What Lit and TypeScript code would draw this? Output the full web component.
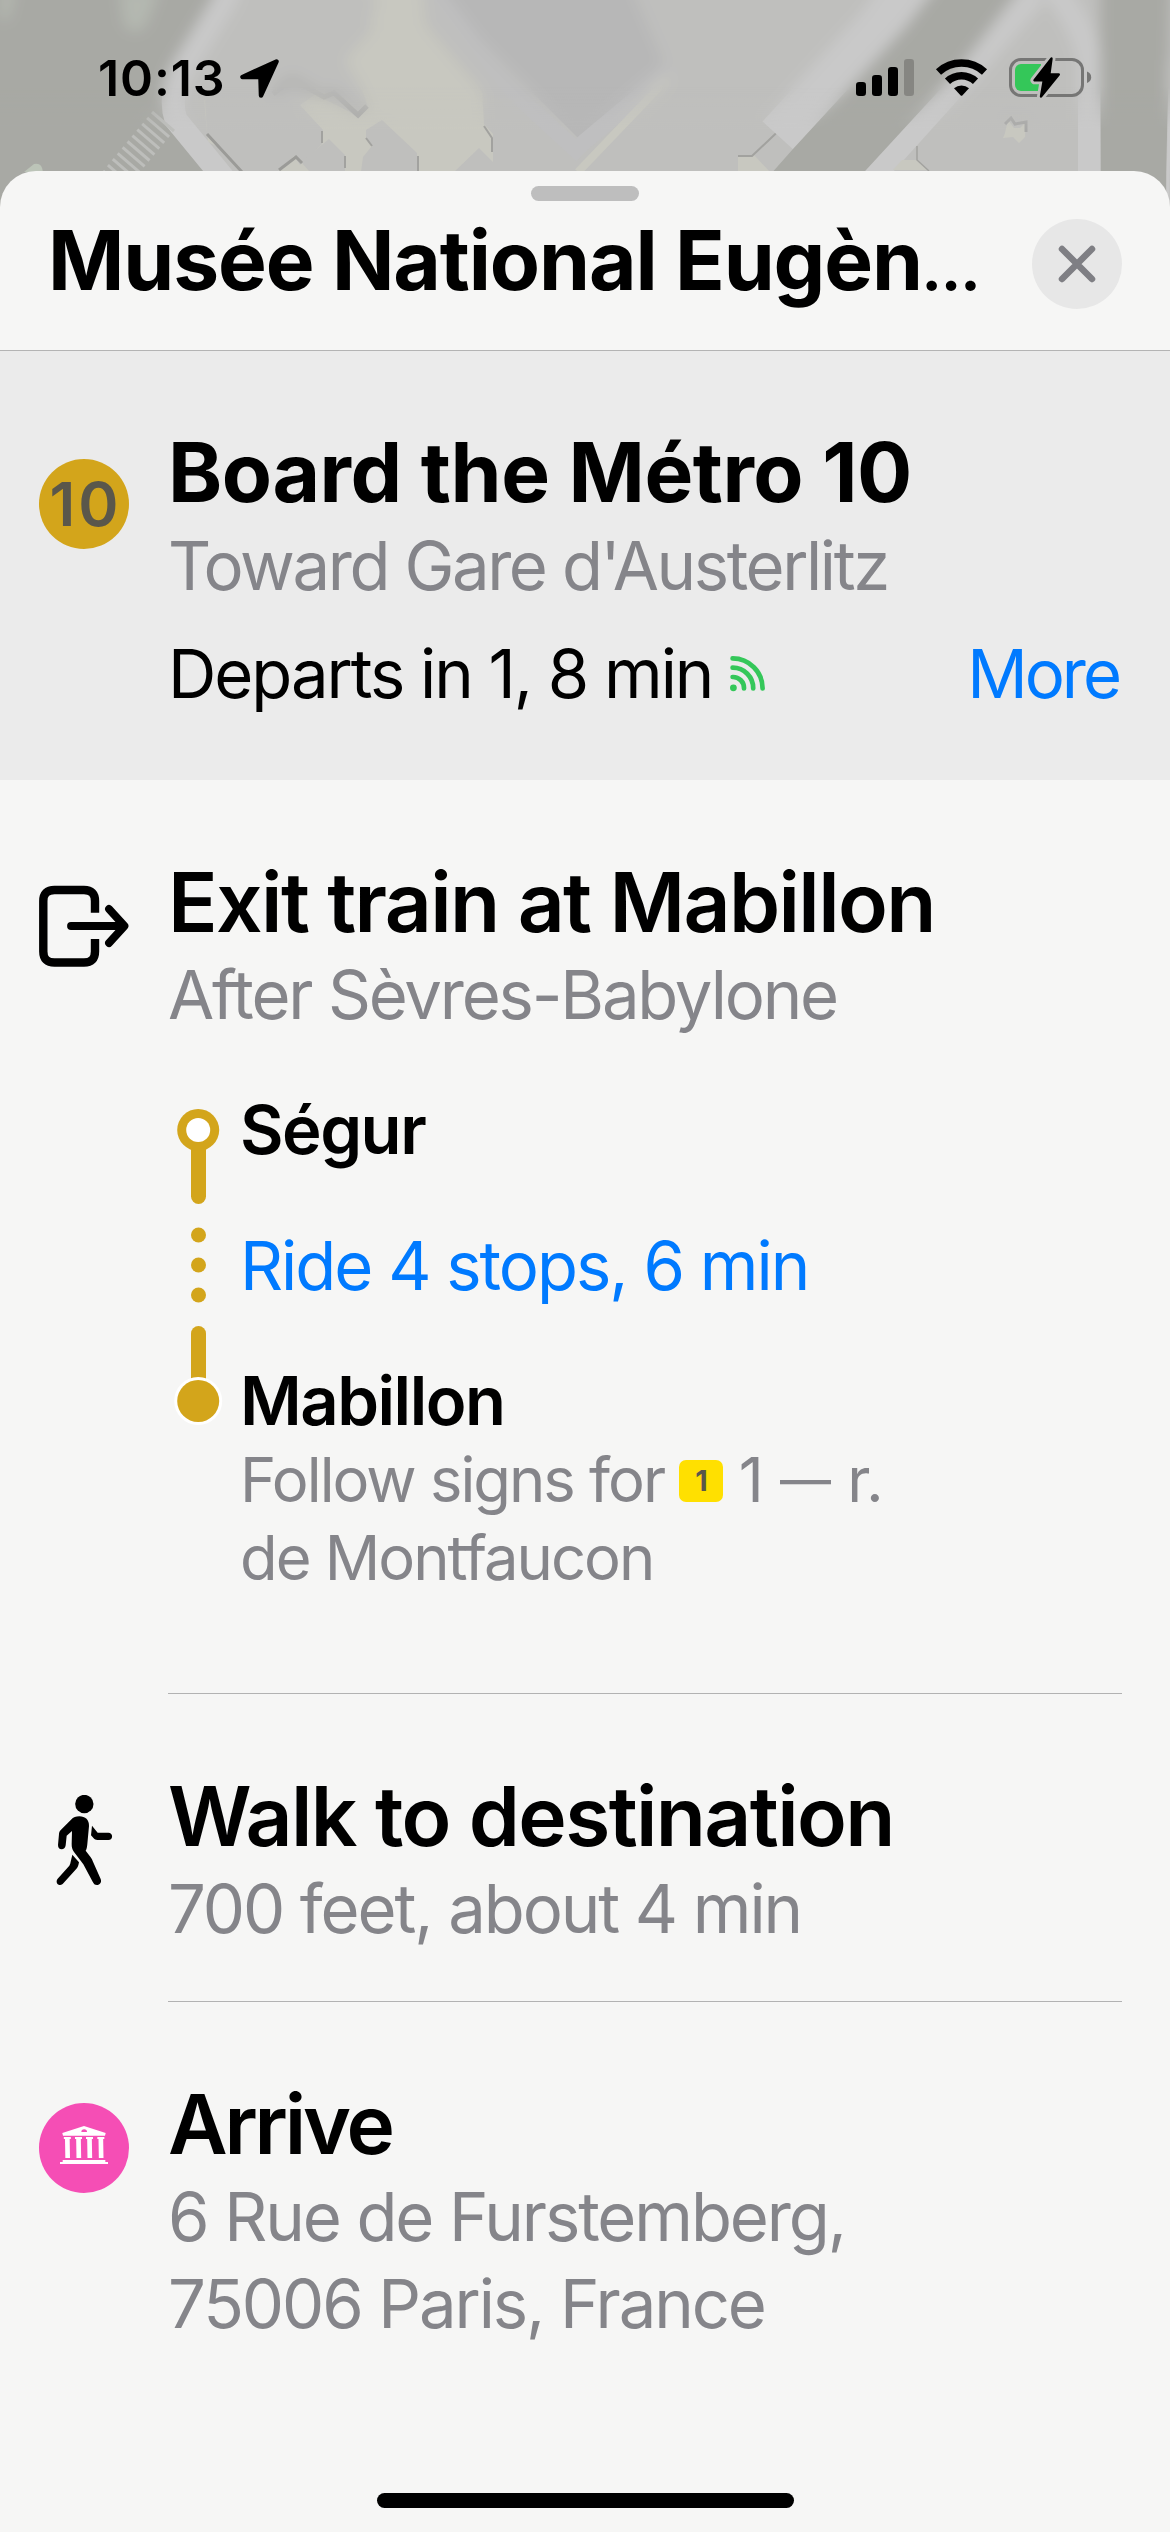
import { LitElement, html, css, svg } from "lit";
import { customElement } from "lit/decorators.js";

@customElement("map-backdrop")
class MapBackdrop extends LitElement {
  static styles = css`
    :host { display: block; }
    svg { display: block; }
  `;
  private stripes() {
    return Array.from({ length: 12 }, (_, i) => {
      const x = 152 - i * 4.9;
      const y = 112 + i * 5.9;
      return svg`<path d="M${x} ${y} l22 19" stroke="#bdbebb" stroke-width="3"/>`;
    });
  }
  render() {
    return html`<svg width="1170" height="240" viewBox="0 0 1170 240">
      <defs>
        <filter id="soft" x="-5%" y="-20%" width="110%" height="140%"><feGaussianBlur stdDeviation="7" /></filter>
        <linearGradient id="fade" x1="0" y1="0" x2="0" y2="1">
          <stop offset="0.36" stop-color="#000" /><stop offset="0.54" stop-color="#fff" />
        </linearGradient>
        <mask id="low"><rect width="1170" height="240" fill="url(#fade)" /></mask>
        <g id="town" fill="none">
          <rect x="-40" y="-40" width="1250" height="300" fill="#bfbfbd" />
          <path d="M420 -40 L620 -40 L668 72 L640 98 L583 143 L490 50 L440 0Z" fill="#b7b7b7" />
          <path d="M425 -20 L500 80 L576 150 L583 143 L670 70" stroke="#bfbfc0" stroke-width="16" />
          <path d="M372 -30 L420 -30 L425 25 L482 92 L484 124 L493 134 L493 162 L479 148 L454 172 L270 172 L208 142 L204 100 L276 103 L292 82 L325 98 L358 108 L340 66 L372 30Z" fill="#c8c8c0" />
          <path d="M203 60 L275 92 L292 82 L325 99 L345 96 L368 108 L358 118 L322 90 L300 105 L323 130 L322 144 L300 165 L294 156 L277 172 L243 172 L207 134Z" fill="#bfbfbd" />
          <path d="M204 0 L380 0 L345 60 L362 88 L368 108 L358 116 L322 98 L292 80 L273 96 L204 100Z" fill="#bfbfbd" />
          <path d="M273 94 L292 79 L324 97 L334 93 L358 115 L367 106" stroke="#a9a9a8" stroke-width="5" />
          <path d="M329 139 L345 155 V172 H310 L301 162Z" fill="#bfbfbd" />
          <path d="M382 120 L417 153 V172 H361 L363 157 L372 146 L366 138 V130Z" fill="#bfbfbd" />
          <path d="M366 138 L372 146 M418 156 V172 M322 131 V143 M484 126 L492 138 V152 M345 156 V168" stroke="#a2a29f" stroke-width="2" />
          <path d="M207 134 L242 172 M279 170 L296 157 L302 163" stroke="#9b9b98" stroke-width="3" />
          <path d="M-40 -40 H232 L180 60 Q160 90 167 118 L208 175 V260 H-40Z" fill="#a8a9a4" />
          <path d="M238 -40 L225 0 L183 68 Q168 95 176 120 L222 176 L240 200" stroke="#c9c9c9" stroke-width="23" />
          <path d="M119 -10 L160 -10 L146 25 Q135 38 124 25Z" fill="#b4b8b0" />
          <path d="M0 -10 H16 L8 20 H0Z" fill="#b4b8b0" />
          <path d="M24 172 L34 164 Q42 162 43 172Z" fill="#bcc4b8" />
          <path d="M578 172 L668 78" stroke="#c8c8c0" stroke-width="8" />
          <path d="M738 155 H754 L770 172 H738Z" fill="#c8c8c0" />
          <path d="M738 156 H752 L790 120" stroke="#a2a29f" stroke-width="2" />
          <path d="M990 -40 L920 60 L818 172" stroke="#c9c9c9" stroke-width="150" />
          <path d="M1000 -40 L932 48 L818 172 L740 260" stroke="#a8a9a4" stroke-width="68" />
          <path d="M1080 -40 L985 70 L893 172 L1092 172 V-40Z" fill="#bfbfbd" />
          <path d="M902 160 H918 L928 170 H893Z" fill="#c8c8c0" />
          <path d="M917 146 V160 L929 171" stroke="#a2a29f" stroke-width="1.5" />
          <path d="M1005 133 L1008 120 L1014 128 L1020 128 L1026 122 L1025 137 L1019 143 L1013 137 L1003 138Z" fill="#c8c8c0" />
          <path d="M1005 124 L1011 118 L1015 124 L1026 122 V132" stroke="#a9a9a8" stroke-width="3" />
          <path d="M1030 -40 Q1095 30 1090 80 V260" stroke="#c9c9c9" stroke-width="24" />
          <path d="M1100 -40 H1172 L1166 172 V260 H1101Z" fill="#a8a9a4" />
          <path d="M1170 60 L1167 260" stroke="#c9c9c9" stroke-width="3" />
          ${this.stripes()}
        </g>
      </defs>
      <use href="#town" filter="url(#soft)" />
      <use href="#town" mask="url(#low)" />
    </svg>`;
  }
}

@customElement("status-bar")
class StatusBar extends LitElement {
  static styles = css`
    :host { display: flex; justify-content: space-between; align-items: flex-start; padding: 54px 74px 0 98px; box-sizing: border-box; }
    .left { display: flex; align-items: flex-start; }
    .time { font-size: 50px; line-height: 48px; font-weight: 600; letter-spacing: 0.9px; }
    svg { display: block; }
    .arrow { margin-left: 11px; }
  `;
  render() {
    return html`
      <div class="left">
        <span class="time">10:13</span>
        <svg class="arrow" width="44" height="48" viewBox="236 54 44 48">
          <path d="M275.5 61.500 L241.500 77 H258 Q259.500 77 259.500 78.500 L260 95.500Z" stroke="#000" stroke-width="4.500" stroke-linejoin="round" />
        </svg>
      </div>
      <svg width="246" height="48" viewBox="850 54 246 48">
        <rect x="856" y="82" width="10" height="14" rx="3.2" />
        <rect x="872" y="75" width="10" height="21" rx="3.2" />
        <rect x="888" y="67" width="10" height="29" rx="3.2" />
        <rect x="904" y="59" width="10" height="37" rx="3.2" fill="#868682" />
        <g fill="none" stroke="#000">
          <path d="M938.500 72 A34 34 0 0 1 984.500 72" stroke-width="7.500" />
          <path d="M947.500 81.300 A20.500 20.500 0 0 1 975.500 81.300" stroke-width="7.500" />
        </g>
        <path d="M954 88.300 A11.500 11.500 0 0 1 969 88.300 L962.300 95.400 Q961.500 96.200 960.700 95.400Z" />
        <rect x="1010.500" y="59.500" width="72" height="36" rx="10.500" fill="none" stroke="#767675" stroke-width="3" />
        <path d="M1087 71.500 Q1091.200 73 1091.200 77.300 Q1091.200 81.500 1087 83Z" fill="#767675" />
        <rect x="1015" y="64" width="25" height="27" rx="6" fill="#34c759" />
        <rect x="1034" y="64" width="7" height="27" fill="#34c759" />
        <path d="M1051.500 58.500 L1034.500 80.300 H1043.800 L1041 96.500 L1058.800 74.500 H1049.300Z" stroke="#bfbfbd" stroke-width="8" stroke-linejoin="round" />
        <path d="M1051.500 58.500 L1034.500 80.300 H1043.800 L1041 96.500 L1058.800 74.500 H1049.300Z" stroke="#000" stroke-width="2.400" stroke-linejoin="round" />
      </svg>
    `;
  }
}

@customElement("app-root")
class AppRoot extends LitElement {
  static styles = css`
    :host { display: block; position: relative; width: 1170px; height: 2532px; overflow: hidden; background: #f6f6f5; color: #000; font-family: Inter, "Liberation Sans", sans-serif; }
    map-backdrop { position: absolute; left: 0; top: 0; }
    status-bar { position: relative; height: 171px; }
    .sheet { position: relative; height: 2361px; box-sizing: border-box; border-radius: 36px 36px 0 0; background: #f6f6f5; overflow: hidden; }
    .grabber { position: absolute; left: 531px; top: 15px; width: 108px; height: 15px; border-radius: 7.5px; background: #bebebe; }
    .home { position: absolute; left: 377px; bottom: 24px; width: 417px; height: 15px; border-radius: 7.5px; background: #000; }
    .header { display: flex; align-items: flex-start; justify-content: space-between; height: 180px; box-sizing: border-box; padding: 40px 48px 0; border-bottom: 1px solid #b4b4b4; }
    .title { font-size: 82px; line-height: 100px; font-weight: 700; letter-spacing: -1.1px; white-space: nowrap; margin: 0; }
    .dots { font-size: 52px; line-height: 1; font-weight: 900; letter-spacing: 0; }
    .close { display: flex; align-items: center; justify-content: center; width: 90px; height: 90px; margin-top: 8px; border-radius: 50%; background: #e7e7e7; flex: none; }
    svg { display: block; }
    .step { display: grid; grid-template-columns: 90px 1fr; column-gap: 39px; padding-left: 39px; }
    .icon { margin-top: 101px; width: 90px; height: 90px; }
    .body { padding: 74px 0 49px; margin-right: 48px; border-bottom: 1px solid #b2b2b2; }
    .last .body { border-bottom: none; }
    .board { height: 429px; background: #ebebeb; }
    .board .body { border-bottom: none; padding-top: 73px; }
    .board .icon { margin-top: 108px; }
    .ride { height: 914px; }
    .name { font-size: 82px; line-height: 98px; font-weight: 600; letter-spacing: -1.62px; margin: 0 0 -1px; white-space: nowrap; }
    .name.strong { font-weight: 700; letter-spacing: -0.45px; margin-bottom: 0; }
    .name.tight { letter-spacing: -3.2px; }
    .sub { font-size: 67px; line-height: 87px; letter-spacing: -2.1px; color: #85858a; white-space: nowrap; }
    .sub.t1 { letter-spacing: -2.43px; }
    .sub.t2 { letter-spacing: -2.2px; }
    .route { display: flex; align-items: center; justify-content: center; border-radius: 50%; background: #d3a51b; color: #5a574b; font-size: 61px; font-weight: 600; letter-spacing: 3px; text-indent: 3px; }
    .departs { display: flex; align-items: center; margin-top: 21px; font-size: 67px; line-height: 87px; letter-spacing: -2.05px; white-space: nowrap; }
    .departs svg { margin-left: 18px; }
    .link { color: #007aff; }
    .more { margin: 0 3px 0 auto; letter-spacing: -3px; }
    .stops { display: grid; grid-template-columns: 72px 1fr; margin-top: 47px; }
    .list { display: flex; flex-direction: column; padding-top: 1px; }
    .stop { font-size: 67px; line-height: 87px; margin-bottom: 48.5px; white-space: nowrap; letter-spacing: -2.02px; }
    .stop.station { font-weight: 600; letter-spacing: -1.5px; }
    .stop.end { margin-bottom: -3px; }
    .signs { font-size: 61.5px; line-height: 78px; color: #85858a; letter-spacing: -2px; }
    .signs .ref { letter-spacing: -0.5px; }
    .signs .dash { font-size: 51px; line-height: 1; vertical-align: 4px; }
    .signs .exit { display: inline-flex; align-items: center; justify-content: center; vertical-align: 11px; width: 44px; height: 42px; border-radius: 7px; background: #ffe000; color: #5a574b; font-size: 29px; line-height: 42px; font-weight: 700; letter-spacing: 0; }
    .poi { display: flex; border-radius: 50%; background: #f54eb5; }
  `;

  private exitIcon() {
    return svg`<svg class="icon" viewBox="0 0 90 90" fill="none" stroke="#000">
      <path d="M56 31.700 V20 Q56 9 45 9 H15.500 Q4.300 9 4.300 20 V70.500 Q4.300 81.500 15.500 81.500 H45 Q56 81.500 56 70.500 V58" stroke-width="8.400" />
      <path d="M32 45 H84 M70 28 L85.500 45 L70 62" stroke-width="7.800" stroke-linecap="round" stroke-linejoin="round" />
    </svg>`;
  }
  private walkIcon() {
    return svg`<svg class="icon" viewBox="117 165 270 270">
      <circle cx="253" cy="192" r="27.500" />
      <path d="M238 229 C256 229 268 240 267 258 L262 312 C261 322 260 327 257 332 L272 352 C275 356 277 360 279 365 L302 417 C306 428 299 435 291 435 C284 435 281 431 278 425 L250 373 L222 336 C216 328 215 321 215 312 L216 273 L200 287 L197 316 C196 324 191 328 185 328 C178 328 174 323 174 315 L177 282 C177 277 179 273 183 269 L213 239 C220 232 228 229 238 229Z" />
      <path d="M217 344 L237 367 C235 377 234 382 228 388 L190 430 C186 435 181 436 176 434 C169 431 168 422 173 416 L208 377 C211 372 211 369 212 365Z" />
      <path d="M276 257 L293 278 H325 C340 278 340 300 325 300 H292 C287 300 284 298 281 295 L273 286Z" />
    </svg>`;
  }
  private museumIcon() {
    return svg`<svg width="90" height="90" viewBox="117 129 270 270" fill="#fff">
      <path d="M252 198 L317 219 L315 227 H189 L187 219Z" />
      <path d="M244 216 a8.500 8.500 0 0 1 17 0Z" fill="#f54eb5" />
      ${[202, 235.5, 268.5, 302.5].map((x) => svg`<path d="M${x - 10.5} 231 h21 v6 h-3.500 l1 57 h-14 l-1 -57 h-3.500Z" />`)}
      <path d="M188 300 H316 V306 H324 V312 H180 V306 H188Z" />
    </svg>`;
  }

  render() {
    return html`
      <map-backdrop></map-backdrop>
      <status-bar></status-bar>
      <main class="sheet">
        <div class="grabber"></div>
        <header class="header">
          <h1 class="title">Musée National Eugèn<span class="dots">…</span></h1>
          <div class="close">
            <svg width="40" height="40" viewBox="-20 -20 40 40" stroke="#7f7f84" stroke-width="6.500" stroke-linecap="round">
              <path d="M-15 -15 L15 15 M15 -15 L-15 15" />
            </svg>
          </div>
        </header>

        <section class="step board">
          <div class="icon route">10</div>
          <div class="body">
            <h2 class="name strong">Board the Métro 10</h2>
            <div class="sub t1">Toward Gare d'Austerlitz</div>
            <div class="departs">
              <span>Departs in 1, 8 min</span>
              <svg width="36" height="36" viewBox="0 0 36 36" fill="none" stroke="#34c759" stroke-width="4.700" stroke-linecap="round">
                <circle cx="3.400" cy="31.800" r="3.400" fill="#34c759" stroke="none" />
                <path d="M2.600 21 A11 11 0 0 1 14 32.500 M2.600 11.700 A20.500 20.500 0 0 1 23.200 32.500 M2.600 2.400 A30 30 0 0 1 32.600 32.500" />
              </svg>
              <span class="link more">More</span>
            </div>
          </div>
        </section>

        <section class="step ride">
          ${this.exitIcon()}
          <div class="body">
            <h2 class="name">Exit train at Mabillon</h2>
            <div class="sub t2">After Sèvres-Babylone</div>
            <div class="stops">
              <svg width="72" height="345" viewBox="0 0 72 345" fill="#d3a51b">
                <rect x="23" y="50" width="15" height="69" rx="7.500" />
                <circle cx="30.200" cy="45" r="21" />
                <circle cx="30.200" cy="45" r="12" fill="#fff" />
                <circle cx="30.500" cy="150" r="7.500" />
                <circle cx="30.500" cy="180" r="7.500" />
                <circle cx="30.500" cy="210" r="7.500" />
                <rect x="23" y="241" width="15" height="62" rx="7.500" />
                <circle cx="30.200" cy="316" r="24" fill="#fff" />
                <circle cx="30.200" cy="316" r="21" />
              </svg>
              <div class="list">
                <div class="stop station">Ségur</div>
                <div class="stop link">Ride 4 stops, 6 min</div>
                <div class="stop station end">Mabillon</div>
                <div class="signs">Follow signs for <span class="exit">1</span> <span class="ref">1 <span class="dash">—</span> r.</span><br />de Montfaucon</div>
              </div>
            </div>
          </div>
        </section>

        <section class="step">
          ${this.walkIcon()}
          <div class="body">
            <h2 class="name">Walk to destination</h2>
            <div class="sub">700 feet, about 4 min</div>
          </div>
        </section>

        <section class="step last">
          <div class="icon poi">${this.museumIcon()}</div>
          <div class="body">
            <h2 class="name tight">Arrive</h2>
            <div class="sub">6 Rue de Furstemberg,<br />75006 Paris, France</div>
          </div>
        </section>
        <div class="home"></div>
      </main>
    `;
  }
}
